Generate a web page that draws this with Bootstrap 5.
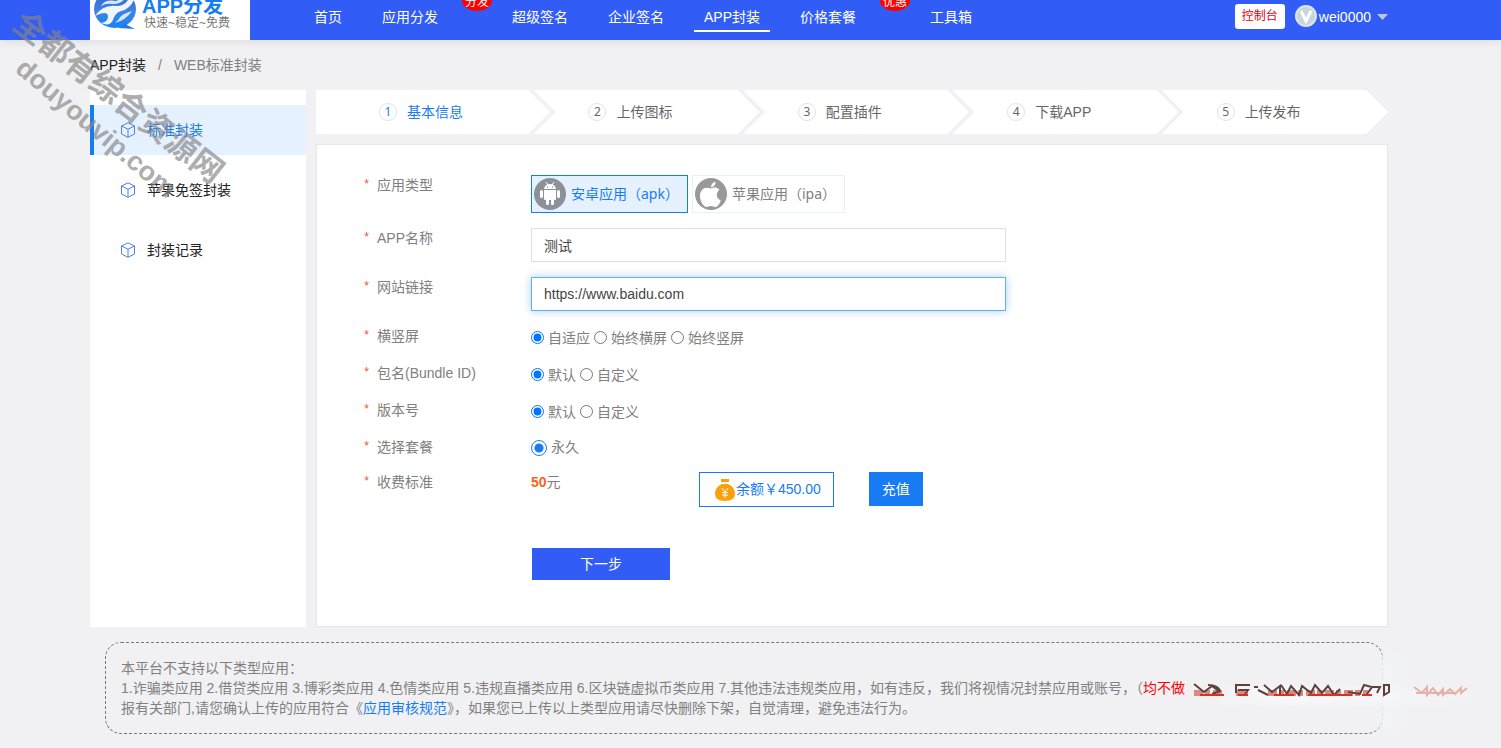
<!DOCTYPE html>
<html lang="zh-CN">
<head>
<meta charset="utf-8">
<meta name="viewport" content="width=device-width, initial-scale=1">
<title>WEB标准封装</title>
<link href="https://cdn.jsdelivr.net/npm/bootstrap@5.3.0/dist/css/bootstrap.min.css" rel="stylesheet">
<style>
:root{--blue:#177cf3;--brand:#315cf6}
body{font-family:"Liberation Sans","Noto Sans CJK SC",sans-serif;font-size:14px;line-height:20px;color:#808080;background:#f1f1f4}
a{text-decoration:none}
.shell{padding-left:90px;padding-right:113px}
.site-head{background:var(--brand);height:40px;box-shadow:0 2px 8px rgba(0,0,0,.08)}
.brand-box{width:160px;height:40px;background:#fff;overflow:hidden}
.main-menu{margin-left:44px}
.main-menu a{color:#fff;padding:7px 0 3px;margin:0 10px;display:block;border-bottom:2px solid transparent}
.main-menu a.current{border-color:#fff}
.main-menu li{padding:0;position:relative}
.main-menu .link-pad{padding-left:10px;padding-right:10px}
.has-tag{margin-right:34px}
.tag{position:absolute;right:-34px;top:-9px;width:30px;height:20px;border-radius:50%;background:#f00;color:#fff;font-size:12px;text-align:center;line-height:22px}
.console-btn{background:#fff;color:#e60012;font-size:12px;line-height:25px;padding:0 7px;border-radius:3px;border:0}
.console-btn:hover{background:#fff;color:#e60012}
.crumb{height:50px}
.side{width:216px;background:#fff;padding-top:15px}
.side a{height:50px;margin-bottom:10px;padding-left:26px;border-left:4px solid transparent;color:#222;gap:11px}
.side a.current{background:#e6f1ff;border-color:var(--blue);color:var(--blue)}
.steps{height:44px}
.step-item{flex:1 1 0;background:#fff;margin-left:-17px;padding-left:55px;gap:10px;color:#666;clip-path:polygon(0 0,calc(100% - 22px) 0,100% 50%,calc(100% - 22px) 100%,0 100%,22px 50%)}
.step-item:first-child{flex-basis:8px;margin-left:0;padding-left:63px;color:var(--blue);clip-path:polygon(0 0,calc(100% - 22px) 0,100% 50%,calc(100% - 22px) 100%,0 100%)}
.step-num{width:18px;height:18px;line-height:16px;border:1px solid #e2e2e2;border-radius:50%;text-align:center;font-family:"Noto Sans","Noto Sans CJK SC",sans-serif;font-size:12px}
.panel{background:#fff;border:1px solid #e6e6e6;padding:30px 46px 46px}
.line{margin-bottom:15px;min-height:22px}
.cap{width:168px;flex:none}
.cap::before{content:"*";color:#ff4a32;font-size:12px;display:inline-block;width:14px;vertical-align:top;font-family:"Liberation Mono",monospace}
.kind{height:38px;border:1px solid #e6f1fd;padding:0 8px 0 2px;gap:5px;color:#808080;font-family:"Noto Sans","Noto Sans CJK SC",sans-serif;cursor:pointer}
.btn-check:checked+.kind{border-color:var(--blue);background:#e6f1ff;color:var(--blue)}
.text-box{width:475px;height:34px;border-radius:0;border:1px solid #e0e0e0;font-size:14px;color:#444;padding:0 12px}
.text-box:focus,.text-box.active{border-color:#66afe9;color:#444;box-shadow:0 0 8px rgba(102,175,233,.6)}
.opts{gap:4px}
.opts label{display:flex;gap:4px;padding-top:2px}
.opts input{margin:3px 0 0;width:13px;height:13px}
.plan input{appearance:none;width:16px;height:16px;margin:3px 0 0;border:1px solid var(--blue);border-radius:50%;background:radial-gradient(circle,var(--blue) 4px,#fff 5px)}
.price{width:168px}
.price b{color:#ff6118}
.balance{border:1px solid var(--blue);color:var(--blue);height:35px;padding:0 12px 2px 14px;margin-right:35px}
.flat-btn{background:var(--blue);color:#fff;border:0;border-radius:0;font-size:14px;height:34px;width:54px;padding:0}
.next-btn{background:var(--brand);color:#fff;border:0;border-radius:0;font-size:14px;width:138px;height:32px;padding:0;margin:26px 0 0 169px}
.notice{margin:15px 5px 14px 15px;border:1px dashed #777;border-radius:16px;padding:15px;position:relative;white-space:nowrap}
.notice a{color:var(--blue)}
.smear{position:absolute;left:1070px;top:-10px;pointer-events:none}
.watermark{position:absolute;left:0;top:0;pointer-events:none}
</style>
</head>
<body class="overflow-x-hidden position-relative">
<header class="site-head shell d-flex align-items-start">
  <a href="#" class="brand-box flex-shrink-0" aria-label="APP分发">
    <svg width="160" height="40" viewBox="0 0 160 40">
      <defs><linearGradient id="globe" x1="0" y1="0" x2="0" y2="1"><stop offset="0" stop-color="#2d62c8"/><stop offset=".55" stop-color="#3f82e3"/><stop offset="1" stop-color="#1684f8"/></linearGradient></defs>
      <ellipse cx="25" cy="9" rx="21" ry="19" fill="url(#globe)"/>
      <path d="M35 24l10 5-17-1z" fill="#247be7"/>
      <path d="M5 16Q13 4 27 6Q34 6 38 0L44 0Q40 9 31 11Q25 13 23 20Q20 27 11 23Q18 22 18 16Q17 10 5 16z" fill="#eef5ff"/>
      <path d="M11 6Q15-1 26 1L36-3Q31 5 22 4Q16 3 11 6zM29 19Q31 14 42 11Q36 20 25 23z" fill="#d5e7ff"/>
      <text x="52" y="13" font-size="20" font-weight="700" fill="#177cf3" textLength="none">APP分发</text>
      <text x="54" y="27" font-size="12" fill="#777">快速~稳定~免费</text>
    </svg>
  </a>
  <nav class="flex-grow-1">
    <ul class="main-menu list-unstyled d-flex mb-0 text-nowrap">
      <li><a class="link-pad" href="#">首页</a></li>
      <li class="has-tag"><a class="link-pad" href="#">应用分发</a><span class="tag">分发</span></li>
      <li><a class="link-pad" href="#">超级签名</a></li>
      <li><a class="link-pad" href="#">企业签名</a></li>
      <li><a class="link-pad current" href="#">APP封装</a></li>
      <li class="has-tag"><a class="link-pad" href="#">价格套餐</a><span class="tag">优惠</span></li>
      <li><a class="link-pad" href="#">工具箱</a></li>
    </ul>
  </nav>
  <div class="d-flex align-items-center pt-1 text-white">
    <button type="button" class="btn console-btn">控制台</button>
    <svg class="ms-2 me-0" width="26" height="25" viewBox="0 0 26 25"><circle cx="13" cy="12" r="11" fill="#dce5ea"/><circle cx="13" cy="12" r="9" fill="#c8d5dc"/><path d="M8 7l5 10 5-10" fill="none" stroke="#fff" stroke-width="3"/></svg>
    <a href="#" class="text-white d-flex align-items-center gap-1">wei0000 <svg width="13" height="8" viewBox="0 0 13 8"><path d="M2 1h11L7.500 7z" fill="#c2c6cf"/></svg></a>
  </div>
</header>

<main class="shell">
  <nav class="crumb d-flex align-items-center" aria-label="位置"><a href="#" style="color:#222">APP封装</a><span class="mx-2 px-1">/</span><span>WEB标准封装</span></nav>
  <div class="d-flex">
    <aside class="side flex-shrink-0">
      <svg class="d-none"><symbol id="cube" viewBox="0 0 16 16"><path d="M8 .800L14.500 4v8L8 15.300 1.500 12V4zM1.500 4L8 7.200 14.500 4M8 7.200v8" fill="none" stroke="#4f80f5"/></symbol></svg>
      <a href="#" class="current d-flex align-items-center"><svg width="16" height="16"><use href="#cube"/></svg>标准封装</a>
      <a href="#" class="d-flex align-items-center"><svg width="16" height="16"><use href="#cube"/></svg>苹果免签封装</a>
      <a href="#" class="d-flex align-items-center"><svg width="16" height="16"><use href="#cube"/></svg>封装记录</a>
    </aside>
    <section class="flex-grow-1 ps-0" style="margin-left:10px">
      <ol class="steps d-flex list-unstyled mb-0">
        <li class="step-item d-flex align-items-center"><span class="step-num">1</span>基本信息</li>
        <li class="step-item d-flex align-items-center"><span class="step-num">2</span>上传图标</li>
        <li class="step-item d-flex align-items-center"><span class="step-num">3</span>配置插件</li>
        <li class="step-item d-flex align-items-center"><span class="step-num">4</span>下载APP</li>
        <li class="step-item d-flex align-items-center"><span class="step-num">5</span>上传发布</li>
      </ol>
      <form class="panel" style="margin-top:10px">
        <div class="line d-flex"><span class="cap">应用类型</span>
          <div class="d-flex gap-1">
            <div><input class="btn-check" type="radio" name="kind" id="apk" checked>
            <label class="kind d-flex align-items-center" for="apk">
              <svg width="32" height="32" viewBox="0 0 32 32"><circle cx="16" cy="16" r="16" fill="#8b9099"/><path d="M10 11Q11 6 16 6T22 11zM10 12h12v9q0 1-1 1h-1v4q0 1-1.500 1T17 26v-4h-2v4q0 1-1.500 1T12 26v-4h-1q-1 0-1-1zM6 13.500q0-1.500 1.500-1.500T9 13.500v5q0 1.500-1.500 1.500T6 18.500zM23 13.500q0-1.500 1.500-1.500T26 13.500v5q0 1.500-1.500 1.500T23 18.500z" fill="#fff"/><path d="M12 4l2 3M20 4l-2 3" stroke="#fff"/><circle cx="13.500" cy="9" r=".7" fill="#8b9099"/><circle cx="18.500" cy="9" r=".7" fill="#8b9099"/></svg>安卓应用（apk）</label></div>
            <div><input class="btn-check" type="radio" name="kind" id="ipa">
            <label class="kind d-flex align-items-center" for="ipa">
              <svg width="32" height="32" viewBox="0 0 32 32"><circle cx="16" cy="16" r="16" fill="#999"/><path d="M16 10.500c2-.8 5-2.500 8.500 1.300-4 3-3.500 8.500 1.300 10.700-1 3-3 6-5 6.500-2 .2-3-1-5-1s-3 1.200-5 1c-4-2-7-9-5.500-14 1.500-5 6-6.500 10.700-4.500zM16 9.500Q16 5 20.500 3.500 20.500 8.500 16 9.500z" fill="#fff"/></svg>苹果应用（ipa）</label></div>
          </div>
        </div>
        <div class="line d-flex"><label class="cap" for="appname">APP名称</label><input id="appname" class="form-control text-box" value="测试"></div>
        <div class="line d-flex"><label class="cap" for="site">网站链接</label><input id="site" class="form-control text-box active" value="https://www.baidu.com"></div>
        <div class="line d-flex"><span class="cap">横竖屏</span><div class="opts d-flex">
          <label><input type="radio" name="rot" checked>自适应</label><label><input type="radio" name="rot">始终横屏</label><label><input type="radio" name="rot">始终竖屏</label></div></div>
        <div class="line d-flex"><span class="cap">包名(Bundle ID)</span><div class="opts d-flex">
          <label><input type="radio" name="bundle" checked>默认</label><label><input type="radio" name="bundle">自定义</label></div></div>
        <div class="line d-flex"><span class="cap">版本号</span><div class="opts d-flex">
          <label><input type="radio" name="ver" checked>默认</label><label><input type="radio" name="ver">自定义</label></div></div>
        <div class="d-flex" style="margin-bottom:15px"><span class="cap">选择套餐</span><label class="plan d-flex gap-1"><input type="radio" name="plan" checked>永久</label></div>
        <div class="line d-flex"><span class="cap">收费标准</span><div class="price"><b>50</b>元</div>
          <div class="balance d-flex align-items-center"><svg width="22" height="24" viewBox="0 0 22 24"><path d="M7 2h8v3H7zM8 7h6q7 3 7 10 0 7-10 7T1 17q0-7 7-10z" fill="#ff9f0a"/><path d="M8 11l3 4 3-4M11 15v6M8 15.500h6M8 18h6" stroke="#fff" fill="none"/></svg>余额￥450.00</div>
          <button type="button" class="btn flat-btn">充值</button>
        </div>
        <button type="button" class="btn next-btn">下一步</button>
      </form>
    </section>
  </div>
  <div class="notice">本平台不支持以下类型应用：<br>1.诈骗类应用 2.借贷类应用 3.博彩类应用 4.色情类应用 5.违规直播类应用 6.区块链虚拟币类应用 7.其他违法违规类应用，如有违反，我们将视情况封禁应用或账号，（<span style="color:#f00">均不做</span><br>报有关部门,请您确认上传的应用符合《<a href="#">应用审核规范</a>》，如果您已上传以上类型应用请尽快删除下架，自觉清理，避免违法行为。
    <svg class="smear" width="325" height="112" viewBox="0 0 325 112">
      <defs>
        <filter id="soft" x="-20%" y="-20%" width="140%" height="140%"><feGaussianBlur stdDeviation="4"/></filter>
        <filter id="fine"><feGaussianBlur stdDeviation=".6"/></filter>
        <linearGradient id="fade"><stop offset="0" stop-color="#fff" stop-opacity="0"/><stop offset=".3" stop-color="#fff" stop-opacity=".7"/><stop offset="1" stop-color="#fff" stop-opacity="0"/></linearGradient>
      </defs>
      <rect x="202" y="22" width="24" height="78" fill="#f2f3f5" filter="url(#soft)"/>
      <rect x="30" y="56" width="280" height="14" fill="url(#fade)" filter="url(#soft)"/>
      <g filter="url(#fine)" fill="none">
        <path d="M18 60h28M60 60h12M92 60h100" stroke="#d98a80" stroke-width="6" stroke-dasharray="9 2 5 3"/>
        <path d="M18 51l10 8 8-6 8 6M32 52q10 0 12 6l-8 3M60 60v-8h14M62 57h10l-3 4M78 54h4M82 57l10 5M88 52l8 7 8-6v8M105 52l6 9 4-8 8 9 3-9 9 7 4-8 7 8 6-7 6 9 6-6M172 59l12 2 4-9 8 2-5 7M196 54h8l-3 6M208 52v10l5-3V52z" stroke="#5e413c" stroke-width="2"/>
        <path d="M24 62h24M62 62h10M98 62h20M132 62h44M186 62h10" stroke="#d53025" stroke-width="2"/>
        <path d="M238 54l8 6 5-6v8l6-7 5 7 5-6v6l7-6 5 5 6-6v5l6-5M240 60h40" stroke="#e5b1a9" stroke-width="2"/>
      </g>
    </svg>
  </div>
</main>
<svg class="watermark" width="240" height="210" viewBox="0 0 240 210" aria-hidden="true">
  <g fill="#858585" fill-opacity=".68" font-weight="700">
    <text transform="translate(11 27) rotate(38)" font-size="32">全都有综合资源网</text>
    <text transform="translate(14 71) rotate(40)" font-size="27">douyouvip.com</text>
  </g>
</svg>
<script src="https://cdn.jsdelivr.net/npm/bootstrap@5.3.0/dist/js/bootstrap.bundle.min.js"></script>
</body>
</html>
